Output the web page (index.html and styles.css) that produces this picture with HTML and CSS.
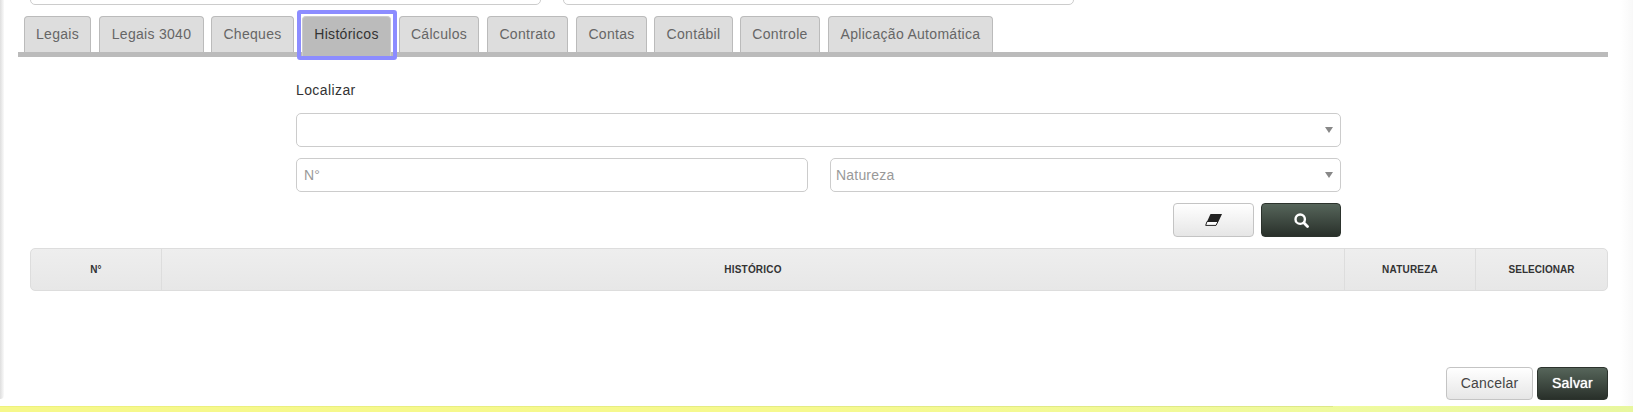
FILE: index.html
```html
<!DOCTYPE html>
<html lang="pt">
<head>
<meta charset="utf-8">
<title>Históricos</title>
<link rel="stylesheet" href="styles.css">
</head>
<body>
<div class="sheet">
  <div class="top-fields">
    <div class="top-field"></div>
    <div class="top-field"></div>
  </div>
  <div class="tabs">
    <a class="tab t1">Legais</a>
    <a class="tab t2">Legais 3040</a>
    <a class="tab t3">Cheques</a>
    <a class="tab active t4">Históricos</a>
    <a class="tab t5">Cálculos</a>
    <a class="tab t6">Contrato</a>
    <a class="tab t7">Contas</a>
    <a class="tab t8">Contábil</a>
    <a class="tab t9">Controle</a>
    <a class="tab t10">Aplicação Automática</a>
  </div>
  <form class="search">
    <label class="search-label">Localizar</label>
    <div class="field select"><span class="caret"></span></div>
    <div class="field-row">
      <div class="field placeholder f-num">N°</div>
      <div class="field select placeholder f-nat">Natureza<span class="caret"></span></div>
    </div>
    <div class="actions">
      <button type="button" class="btn btn-light icon-btn b-clear">
        <svg width="17" height="12" viewBox="0 0 17 12"><path d="M5.5 0H17L13.5 7.5H2.1Z" fill="#222"/><path d="M2 7.5H13L11 11.4H.7Z" fill="#fff" stroke="#222" stroke-width="1"/></svg>
      </button>
      <button type="button" class="btn btn-dark icon-btn b-search">
        <svg width="15" height="15" viewBox="0 0 15 15"><circle cx="6.2" cy="6.2" r="4.7" fill="none" stroke="#fff" stroke-width="2.4"/><path d="M9.8 9.8L13.5 13.5" stroke="#fff" stroke-width="2.8" stroke-linecap="round"/></svg>
      </button>
    </div>
  </form>
  <div class="grid-head">
    <div class="col c-num">N°</div>
    <div class="col c-hist">HISTÓRICO</div>
    <div class="col c-nat">NATUREZA</div>
    <div class="col c-sel">SELECIONAR</div>
  </div>
  <div class="footer">
    <button type="button" class="btn btn-light foot-cancel">Cancelar</button>
    <button type="button" class="btn btn-dark foot-save">Salvar</button>
  </div>
</div>
<div class="band"></div>
</body>
</html>
```
FILE: styles.css
```css
* { box-sizing: border-box; }
html, body { margin: 0; padding: 0; height: 412px; overflow: hidden; background: #fff; }
body { font-family: "Liberation Sans", Arial, sans-serif; font-size: 14px; color: #333; display: flex; flex-direction: column; }
.sheet { height: 406px; flex: none; margin: 0 12px 0 4px; background: #fff; display: flex; flex-direction: column; position: relative; }
.sheet::before { content: ""; position: absolute; left: -4px; top: 0; width: 4px; height: 399px; background: linear-gradient(90deg, #dedede, #fafafa); border-radius: 0 0 4px 0; }
.sheet::after { content: ""; position: absolute; right: -12px; top: 0; width: 12px; height: 406px; background: linear-gradient(90deg, #fff, #f8f8f8); }
.top-fields { height: 5px; flex: none; display: flex; align-items: flex-end; gap: 22px; padding-left: 26px; overflow: hidden; }
.top-field { width: 511px; height: 30px; flex: none; border: 1px solid #ccc; border-radius: 5px; }
.tabs { height: 52px; flex: none; margin: 0 0 0 14px; padding: 11px 0 0 6px; display: flex; align-items: flex-start; border-bottom: 5px solid #bbb; width: 1590px; }
.tab { height: 36px; flex: none; background: #ddd; border: 1px solid #bbb; border-bottom: 0; border-radius: 4px 4px 0 0; color: #666; display: flex; align-items: center; justify-content: center; font-size: 14px; letter-spacing: .3px; padding-bottom: 1px; }
.t1 { width: 67px; margin-right: 8px; }
.t2 { width: 105px; margin-right: 7px; }
.t3 { width: 83px; margin-right: 8px; }
.t4 { width: 89px; margin-right: 8px; }
.t5 { width: 80px; margin-right: 8px; }
.t6 { width: 81px; margin-right: 8px; }
.t7 { width: 71px; margin-right: 7px; }
.t8 { width: 79px; margin-right: 7px; }
.t9 { width: 80px; margin-right: 8px; }
.t10 { width: 165px; }
.tab.active { background: #bbb; border-color: #ccc; color: #333; height: 40px; padding-bottom: 5px; position: relative; z-index: 1; }
.tab.active::after { content: ""; position: absolute; left: -6px; right: -7px; top: -7px; bottom: -4px; border: 4px solid #8c8cff; border-radius: 3px; }
.search { width: 1045px; margin: 0 0 0 292px; display: flex; flex-direction: column; }
.search-label { line-height: 20px; margin-top: 23px; margin-bottom: 13px; letter-spacing: .4px; }
.field { height: 34px; border: 1px solid #ccc; border-radius: 5px; background: #fff; position: relative; }
.field-row { display: flex; justify-content: space-between; margin-top: 11px; }
.placeholder { color: #999; line-height: 32px; padding-left: 7px; letter-spacing: .2px; }
.f-num { width: 512px; }
.f-nat { width: 511px; padding-left: 5px; }
.caret { position: absolute; right: 7px; top: 13px; width: 0; height: 0; border-left: 4px solid transparent; border-right: 4px solid transparent; border-top: 6px solid #888; }
.actions { display: flex; justify-content: flex-end; gap: 7px; margin-top: 11px; }
.btn { font-family: inherit; font-size: 14px; border-radius: 4px; display: flex; align-items: center; justify-content: center; padding: 0; letter-spacing: .2px; }
.btn-light { background: linear-gradient(#fff, #e6e6e6); border: 1px solid #c4c4c4; color: #444; }
.btn-dark { background: linear-gradient(#56655a, #29302a); border: 1px solid #2c332d; color: #fff; }
.icon-btn { height: 34px; }
.b-clear { width: 81px; }
.b-search { width: 80px; }
.grid-head { height: 43px; flex: none; margin: 11px 0 0 26px; width: 1578px; display: flex; border: 1px solid #ddd; border-radius: 5px; background: linear-gradient(#eee, #e7e7e7); font-size: 10px; font-weight: bold; letter-spacing: .2px; color: #333; }
.col { display: flex; align-items: center; justify-content: center; padding-bottom: 1px; }
.c-num { width: 131px; border-right: 1px solid #ddd; }
.c-hist { width: 1183px; border-right: 1px solid #ddd; }
.c-nat { width: 131px; border-right: 1px solid #ddd; }
.c-sel { flex: 1; letter-spacing: .05px; }
.footer { margin: 76px 0 0 0; display: flex; justify-content: flex-end; gap: 4px; padding-right: 13px; }
.foot-cancel { width: 87px; height: 33px; padding-bottom: 2px; }
.foot-save { width: 71px; height: 33px; padding-bottom: 2px; text-shadow: 0 0 1px #fff; }
.band { flex: 1; background: linear-gradient(90deg, #eef27c, #dde888) 0 0 / 1333px 1px no-repeat, linear-gradient(90deg, #f6f88a 0, #f6f98e 50%, #eefa9f 85%, #e8f79e 100%); }
```
